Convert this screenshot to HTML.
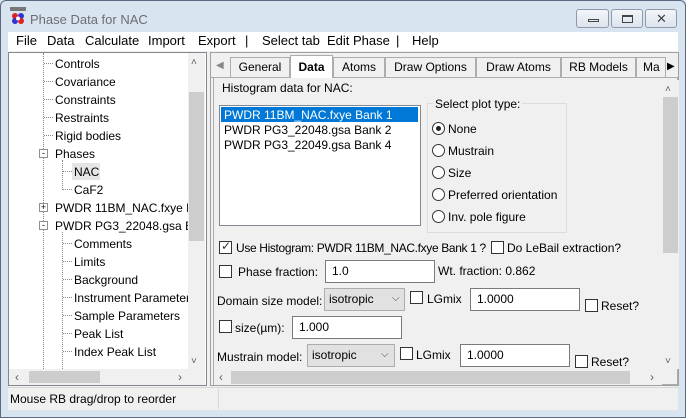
<!DOCTYPE html>
<html><head><meta charset="utf-8"><style>
*{margin:0;padding:0;box-sizing:border-box}
body{width:686px;height:418px;overflow:hidden;background:#d9e4f1;font-family:"Liberation Sans",sans-serif;font-size:12px;color:#000;position:relative}
.a{position:absolute;white-space:nowrap}
.t{position:absolute;white-space:nowrap;line-height:14px}
.cb{position:absolute;width:13px;height:13px;border:1px solid #333;background:#fff}
.rb{position:absolute;width:13px;height:13px;border:1px solid #333;border-radius:50%;background:#fff}
.tb{position:absolute;border:1px solid #7a7a7a;background:#fff;height:23px;padding:2px 6px;line-height:16px}
.combo{position:absolute;border:1px solid #adadad;background:#e1e1e1;height:23px;padding:3px 4px;line-height:15px}
.tab{position:absolute;top:57px;height:20px;border:1px solid #adadad;border-bottom:none;background:#f0f0f0;text-align:center;line-height:18px}
.wb{position:absolute;top:9px;height:19px;border:1px solid #8e9aab;border-radius:3px;background:linear-gradient(#f2f5f9,#dde4ed)}
</style></head><body>
<div class="a" style="left:0;top:0;width:686px;height:418px;border:1px solid #5b6a80;border-radius:6px 6px 0 0"></div>
<svg class="a" style="left:10px;top:7px" width="16" height="18"><rect x="0" y="0" width="16" height="4" fill="#777"/><circle cx="5" cy="9" r="3" fill="#d22"/><circle cx="11" cy="9" r="3" fill="#33c"/><circle cx="5" cy="14" r="3" fill="#33c"/><circle cx="11" cy="14" r="3" fill="#d22"/><circle cx="8" cy="11.5" r="2" fill="#fff"/></svg>
<div class="a" style="left:30px;top:12px;font-size:13px;color:#6d6d6d">Phase Data for NAC</div>
<div class="wb" style="left:576px;width:33px"><div class="a" style="left:11px;top:9px;width:11px;height:3px;border:1px solid #444"></div></div>
<div class="wb" style="left:611px;width:32px"><div class="a" style="left:10px;top:5px;width:11px;height:8px;border:1px solid #444;border-top-width:2px"></div></div>
<div class="wb" style="left:645px;width:32px"><div class="a" style="left:10px;top:1px;font-size:13px;color:#444">✕</div></div>
<div class="a" style="left:8px;top:32px;width:670px;height:19px;background:#fff"></div>
<div class="t" style="left:16px;top:34px;font-size:13px">File</div>
<div class="t" style="left:47px;top:34px;font-size:13px">Data</div>
<div class="t" style="left:85px;top:34px;font-size:13px">Calculate</div>
<div class="t" style="left:148px;top:34px;font-size:13px">Import</div>
<div class="t" style="left:198px;top:34px;font-size:13px">Export</div>
<div class="t" style="left:245px;top:34px;font-size:13px">|</div>
<div class="t" style="left:262px;top:34px;font-size:13px">Select tab</div>
<div class="t" style="left:327px;top:34px;font-size:13px">Edit Phase</div>
<div class="t" style="left:396px;top:34px;font-size:13px">|</div>
<div class="t" style="left:412px;top:34px;font-size:13px">Help</div>
<div class="a" style="left:8px;top:51px;width:670px;height:359px;background:#f0f0f0"></div>
<div class="a" style="left:8px;top:52px;width:199px;height:334px;border:1px solid #828790;background:#fff"></div>
<div class="a" style="left:188px;top:53px;width:17px;height:317px;background:#f0f0f0"></div>
<div class="a" style="left:189px;top:92px;width:15px;height:149px;background:#cdcdcd"></div>
<div class="t" style="left:191px;top:56px;font-size:10px;color:#606060">˄</div>
<div class="t" style="left:191px;top:355px;font-size:10px;color:#606060">˅</div>
<div class="a" style="left:9px;top:369px;width:196px;height:16px;background:#f0f0f0"></div>
<div class="a" style="left:29px;top:371px;width:71px;height:12px;background:#cdcdcd"></div>
<div class="t" style="left:15px;top:370px;color:#606060">‹</div>
<div class="t" style="left:178px;top:370px;color:#606060">›</div>
<div class="a" style="left:43px;top:53px;height:316px;border-left:1px dotted #888"></div>
<div class="a" style="left:62px;top:160px;height:30px;border-left:1px dotted #888"></div>
<div class="a" style="left:62px;top:232px;height:137px;border-left:1px dotted #888"></div>
<div class="a" style="left:44px;top:63px;width:9px;border-top:1px dotted #888"></div>
<div class="a" style="left:44px;top:81px;width:9px;border-top:1px dotted #888"></div>
<div class="a" style="left:44px;top:99px;width:9px;border-top:1px dotted #888"></div>
<div class="a" style="left:44px;top:117px;width:9px;border-top:1px dotted #888"></div>
<div class="a" style="left:44px;top:135px;width:9px;border-top:1px dotted #888"></div>
<div class="t" style="left:55px;top:57px">Controls</div>
<div class="t" style="left:55px;top:75px">Covariance</div>
<div class="t" style="left:55px;top:93px">Constraints</div>
<div class="t" style="left:55px;top:111px">Restraints</div>
<div class="t" style="left:55px;top:129px">Rigid bodies</div>
<div class="a" style="left:39px;top:149px;width:9px;height:9px;border:1px solid #919191;background:#fff;font-size:9px;line-height:6px;text-align:center">-</div>
<div class="t" style="left:55px;top:147px">Phases</div>
<div class="a" style="left:63px;top:171px;width:9px;border-top:1px dotted #888"></div>
<div class="a" style="left:63px;top:189px;width:9px;border-top:1px dotted #888"></div>
<div class="a" style="left:72px;top:163px;width:28px;height:17px;background:#e5e5e5"></div>
<div class="t" style="left:74px;top:165px">NAC</div>
<div class="t" style="left:74px;top:183px">CaF2</div>
<div class="a" style="left:39px;top:203px;width:9px;height:9px;border:1px solid #919191;background:#fff;font-size:9px;line-height:7px;text-align:center">+</div>
<div class="t" style="left:55px;top:201px;width:133px;overflow:hidden">PWDR 11BM_NAC.fxye Ba</div>
<div class="a" style="left:39px;top:221px;width:9px;height:9px;border:1px solid #919191;background:#fff;font-size:9px;line-height:6px;text-align:center">-</div>
<div class="t" style="left:55px;top:219px;width:133px;overflow:hidden">PWDR PG3_22048.gsa Bar</div>
<div class="a" style="left:63px;top:243px;width:9px;border-top:1px dotted #888"></div>
<div class="a" style="left:63px;top:261px;width:9px;border-top:1px dotted #888"></div>
<div class="a" style="left:63px;top:279px;width:9px;border-top:1px dotted #888"></div>
<div class="a" style="left:63px;top:297px;width:9px;border-top:1px dotted #888"></div>
<div class="a" style="left:63px;top:315px;width:9px;border-top:1px dotted #888"></div>
<div class="a" style="left:63px;top:333px;width:9px;border-top:1px dotted #888"></div>
<div class="a" style="left:63px;top:351px;width:9px;border-top:1px dotted #888"></div>
<div class="t" style="left:74px;top:237px">Comments</div>
<div class="t" style="left:74px;top:255px">Limits</div>
<div class="t" style="left:74px;top:273px">Background</div>
<div class="t" style="left:74px;top:291px;width:114px;overflow:hidden">Instrument Parameters</div>
<div class="t" style="left:74px;top:309px">Sample Parameters</div>
<div class="t" style="left:74px;top:327px">Peak List</div>
<div class="t" style="left:74px;top:345px">Index Peak List</div>
<div class="a" style="left:8px;top:387px;width:670px;border-top:1px solid #d7d7d7"></div>
<div class="t" style="left:10px;top:392px">Mouse RB drag/drop to reorder</div>
<div class="a" style="left:218px;top:389px;height:20px;border-left:1px solid #d7d7d7"></div>
<div class="a" style="left:210px;top:52px;width:469px;height:334px;border:1px solid #a0a0a0;background:#f0f0f0"></div>
<div class="t" style="left:216px;top:59px;color:#888;font-size:10px">◀</div>
<div class="tab" style="left:230px;width:60px">General</div>
<div class="a" style="left:290px;top:55px;width:43px;height:23px;border:1px solid #adadad;border-bottom:none;background:#fff;text-align:center;line-height:22px;font-weight:bold;z-index:2">Data</div>
<div class="tab" style="left:333px;width:52px">Atoms</div>
<div class="tab" style="left:385px;width:91px">Draw Options</div>
<div class="tab" style="left:476px;width:85px">Draw Atoms</div>
<div class="tab" style="left:561px;width:75px">RB Models</div>
<div class="tab" style="left:636px;width:30px;text-align:left;padding-left:6px;overflow:hidden">Ma</div>
<div class="t" style="left:667px;top:60px;font-size:10px">▶</div>
<div class="a" style="left:211px;top:77px;width:467px;border-top:1px solid #adadad"></div>
<div class="a" style="left:213px;top:78px;width:465px;height:307px;border-left:1px solid #adadad;border-right:1px solid #adadad;border-bottom:1px solid #adadad"></div>
<div class="a" style="left:662px;top:80px;width:17px;height:289px;background:#f0f0f0"></div>
<div class="a" style="left:663px;top:97px;width:15px;height:156px;background:#cdcdcd"></div>
<div class="t" style="left:665px;top:83px;font-size:10px;color:#606060">˄</div>
<div class="t" style="left:665px;top:355px;font-size:10px;color:#606060">˅</div>
<div class="a" style="left:214px;top:370px;width:448px;height:15px;background:#f0f0f0"></div>
<div class="a" style="left:231px;top:371px;width:399px;height:13px;background:#cdcdcd"></div>
<div class="t" style="left:219px;top:370px;color:#606060">‹</div>
<div class="t" style="left:650px;top:370px;color:#606060">›</div>
<div class="t" style="left:222px;top:81px">Histogram data for NAC:</div>
<div class="a" style="left:219px;top:105px;width:202px;height:121px;border:1px solid #828790;background:#fff"></div>
<div class="a" style="left:221px;top:107px;width:197px;height:15px;background:#0078d7"></div>
<div class="t" style="left:224px;top:108px;color:#fff">PWDR 11BM_NAC.fxye Bank 1</div>
<div class="t" style="left:224px;top:123px">PWDR PG3_22048.gsa Bank 2</div>
<div class="t" style="left:224px;top:138px">PWDR PG3_22049.gsa Bank 4</div>
<div class="a" style="left:427px;top:103px;width:140px;height:130px;border:1px solid #dcdcdc"></div>
<div class="t" style="left:433px;top:97px;background:#f0f0f0;padding:0 2px">Select plot type:</div>
<div class="rb" style="left:432px;top:122px"><div class="a" style="left:3px;top:3px;width:5px;height:5px;border-radius:50%;background:#222"></div></div>
<div class="t" style="left:448px;top:122px">None</div>
<div class="rb" style="left:432px;top:144px"></div><div class="t" style="left:448px;top:144px">Mustrain</div>
<div class="rb" style="left:432px;top:166px"></div><div class="t" style="left:448px;top:166px">Size</div>
<div class="rb" style="left:432px;top:188px"></div><div class="t" style="left:448px;top:188px">Preferred orientation</div>
<div class="rb" style="left:432px;top:210px"></div><div class="t" style="left:448px;top:210px">Inv. pole figure</div>
<div class="cb" style="left:219px;top:241px"><div class="a" style="left:1px;top:-3px;font-size:12px;color:#333">✓</div></div>
<div class="t" style="left:236px;top:241px;letter-spacing:-0.35px">Use Histogram: PWDR 11BM_NAC.fxye Bank 1 ?</div>
<div class="cb" style="left:491px;top:241px"></div>
<div class="t" style="left:507px;top:241px">Do LeBail extraction?</div>
<div class="cb" style="left:219px;top:265px"></div>
<div class="t" style="left:238px;top:265px">Phase fraction:</div>
<div class="tb" style="left:325px;top:260px;width:110px">1.0</div>
<div class="t" style="left:438px;top:264px">Wt. fraction: 0.862</div>
<div class="t" style="left:217px;top:294px">Domain size model:</div>
<div class="combo" style="left:324px;top:288px;width:81px">isotropic<span class="a" style="left:67px;top:2px;font-size:10px;color:#444">⌵</span></div>
<div class="cb" style="left:410px;top:291px"></div>
<div class="t" style="left:427px;top:292px">LGmix</div>
<div class="tb" style="left:470px;top:288px;width:110px">1.0000</div>
<div class="cb" style="left:585px;top:299px"></div>
<div class="t" style="left:601px;top:299px">Reset?</div>
<div class="cb" style="left:219px;top:320px"></div>
<div class="t" style="left:235px;top:321px">size(µm):</div>
<div class="tb" style="left:292px;top:316px;width:110px">1.000</div>
<div class="t" style="left:217px;top:350px">Mustrain model:</div>
<div class="combo" style="left:307px;top:344px;width:88px">isotropic<span class="a" style="left:73px;top:2px;font-size:10px;color:#444">⌵</span></div>
<div class="cb" style="left:400px;top:347px"></div>
<div class="t" style="left:416px;top:348px">LGmix</div>
<div class="tb" style="left:460px;top:344px;width:110px">1.0000</div>
<div class="cb" style="left:575px;top:355px"></div>
<div class="t" style="left:591px;top:355px">Reset?</div>
</body></html>
